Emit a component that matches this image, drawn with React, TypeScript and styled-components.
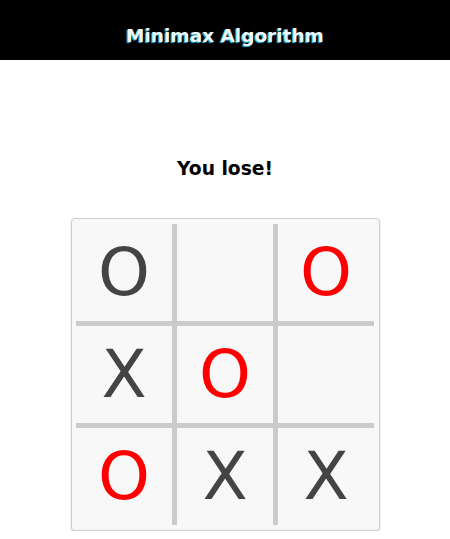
import React from "react";
import styled, { createGlobalStyle } from "styled-components";

const Global = createGlobalStyle`
  html, body { margin: 0; padding: 0; background: #fff; }
  body { font-family: "DejaVu Sans", sans-serif; }
`;

const Page = styled.div`
  display: flex;
  flex-direction: column;
  align-items: center;
  width: 450px;
`;

const Header = styled.header`
  width: 100%;
  height: 60px;
  background: #000;
  display: flex;
  align-items: center;
  justify-content: center;
  padding-top: 10px;
  box-sizing: border-box;
`;

const Title = styled.h1`
  margin: 0;
  font-family: "DejaVu Sans", sans-serif;
  font-weight: bold;
  font-size: 18.5px;
  color: #eef8fb;
  text-shadow: -1px 1px 1px #22b8f0;
`;

const Status = styled.div`
  margin-top: 98px;
  font-family: "DejaVu Sans", sans-serif;
  font-weight: bold;
  font-size: 18.7px;
  line-height: 22px;
  color: #000;
`;

const Board = styled.div`
  margin-top: 38px;
  margin-left: 1px;
  background: #f8f8f8;
  border: 1px solid #cfcfcf;
  border-radius: 4px;
  box-shadow: 0 1px 2px rgba(0, 0, 0, 0.2);
  padding: 5px 5px 5px 4px;
  display: grid;
  grid-template-columns: repeat(3, auto);
`;

const Cell = styled.div<{ $right: boolean; $bottom: boolean; $red: boolean }>`
  width: 96px;
  height: 97px;
  border-right: ${(p) => (p.$right ? "5px solid #cbcbcb" : "none")};
  border-bottom: ${(p) => (p.$bottom ? "5px solid #cbcbcb" : "none")};
  display: flex;
  align-items: center;
  justify-content: center;
  font-family: "DejaVu Sans", sans-serif;
  font-size: 66px;
  line-height: 1;
  color: ${(p) => (p.$red ? "#ff0000" : "#444444")};
`;

const cells: { v: string; red?: boolean }[] = [
  { v: "O" },
  { v: "" },
  { v: "O", red: true },
  { v: "X" },
  { v: "O", red: true },
  { v: "" },
  { v: "O", red: true },
  { v: "X" },
  { v: "X" },
];

export default function App() {
  return (
    <Page>
      <Global />
      <Header>
        <Title>Minimax Algorithm</Title>
      </Header>
      <Status>You lose!</Status>
      <Board>
        {cells.map((c, i) => (
          <Cell
            key={i}
            $right={i % 3 !== 2}
            $bottom={i < 6}
            $red={!!c.red}
          >
            {c.v}
          </Cell>
        ))}
      </Board>
    </Page>
  );
}
